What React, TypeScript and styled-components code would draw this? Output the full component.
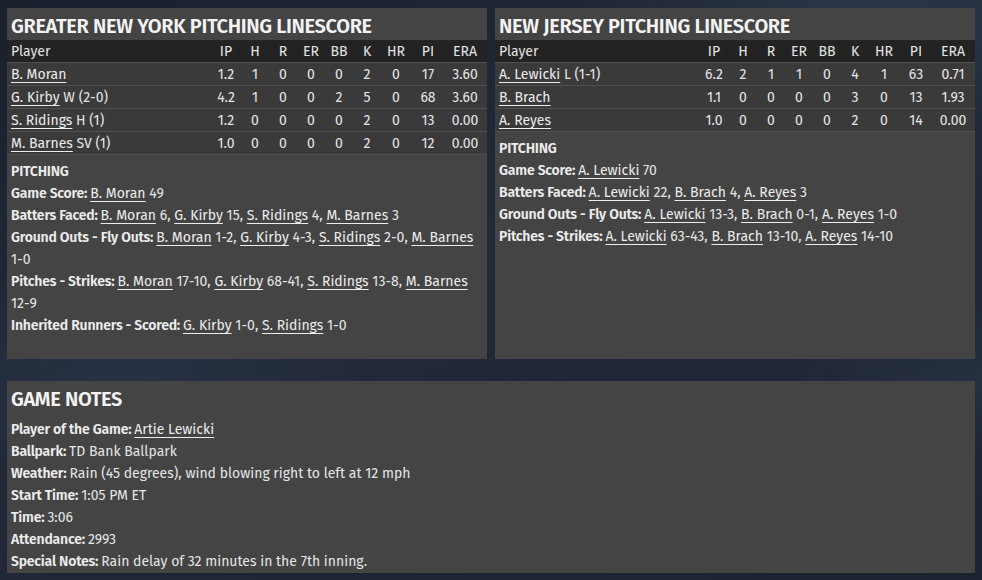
import React from "react";
import styled, { createGlobalStyle } from "styled-components";

const GlobalStyle = createGlobalStyle`
    html, body {
        margin: 0;
        padding: 0;
        background: #1c2331;
    }
    body {
        font-family: "Fira Sans", Roboto, "Noto Sans", sans-serif;
        color: #e4e4e4;
    }
`;

type Pitcher = {
    name: string;
    note?: string;
    stats: string[];
};

type Part = { link?: string; text?: string };

type StatLine = { label: string; parts: Part[] };

const COLUMNS = ["IP", "H", "R", "ER", "BB", "K", "HR", "PI", "ERA"];

const home: Pitcher[] = [
    { name: "B. Moran", stats: ["1.2", "1", "0", "0", "0", "2", "0", "17", "3.60"] },
    { name: "G. Kirby", note: "W (2-0)", stats: ["4.2", "1", "0", "0", "2", "5", "0", "68", "3.60"] },
    { name: "S. Ridings", note: "H (1)", stats: ["1.2", "0", "0", "0", "0", "2", "0", "13", "0.00"] },
    { name: "M. Barnes", note: "SV (1)", stats: ["1.0", "0", "0", "0", "0", "2", "0", "12", "0.00"] },
];

const away: Pitcher[] = [
    { name: "A. Lewicki", note: "L (1-1)", stats: ["6.2", "2", "1", "1", "0", "4", "1", "63", "0.71"] },
    { name: "B. Brach", stats: ["1.1", "0", "0", "0", "0", "3", "0", "13", "1.93"] },
    { name: "A. Reyes", stats: ["1.0", "0", "0", "0", "0", "2", "0", "14", "0.00"] },
];

const homeLines: StatLine[] = [
    { label: "Game Score:", parts: [{ link: "B. Moran" }, { text: " 49" }] },
    {
        label: "Batters Faced:",
        parts: [
            { link: "B. Moran" }, { text: " 6, " },
            { link: "G. Kirby" }, { text: " 15, " },
            { link: "S. Ridings" }, { text: " 4, " },
            { link: "M. Barnes" }, { text: " 3" },
        ],
    },
    {
        label: "Ground Outs - Fly Outs:",
        parts: [
            { link: "B. Moran" }, { text: " 1-2, " },
            { link: "G. Kirby" }, { text: " 4-3, " },
            { link: "S. Ridings" }, { text: " 2-0, " },
            { link: "M. Barnes" }, { text: " 1-0" },
        ],
    },
    {
        label: "Pitches - Strikes:",
        parts: [
            { link: "B. Moran" }, { text: " 17-10, " },
            { link: "G. Kirby" }, { text: " 68-41, " },
            { link: "S. Ridings" }, { text: " 13-8, " },
            { link: "M. Barnes" }, { text: " 12-9" },
        ],
    },
    {
        label: "Inherited Runners - Scored:",
        parts: [
            { link: "G. Kirby" }, { text: " 1-0, " },
            { link: "S. Ridings" }, { text: " 1-0" },
        ],
    },
];

const awayLines: StatLine[] = [
    { label: "Game Score:", parts: [{ link: "A. Lewicki" }, { text: " 70" }] },
    {
        label: "Batters Faced:",
        parts: [
            { link: "A. Lewicki" }, { text: " 22, " },
            { link: "B. Brach" }, { text: " 4, " },
            { link: "A. Reyes" }, { text: " 3" },
        ],
    },
    {
        label: "Ground Outs - Fly Outs:",
        parts: [
            { link: "A. Lewicki" }, { text: " 13-3, " },
            { link: "B. Brach" }, { text: " 0-1, " },
            { link: "A. Reyes" }, { text: " 1-0" },
        ],
    },
    {
        label: "Pitches - Strikes:",
        parts: [
            { link: "A. Lewicki" }, { text: " 63-43, " },
            { link: "B. Brach" }, { text: " 13-10, " },
            { link: "A. Reyes" }, { text: " 14-10" },
        ],
    },
];

const notes: StatLine[] = [
    { label: "Player of the Game:", parts: [{ link: "Artie Lewicki" }] },
    { label: "Ballpark:", parts: [{ text: "TD Bank Ballpark" }] },
    { label: "Weather:", parts: [{ text: "Rain (45 degrees), wind blowing right to left at 12 mph" }] },
    { label: "Start Time:", parts: [{ text: "1:05 PM ET" }] },
    { label: "Time:", parts: [{ text: "3:06" }] },
    { label: "Attendance:", parts: [{ text: "2993" }] },
    { label: "Special Notes:", parts: [{ text: "Rain delay of 32 minutes in the 7th inning." }] },
];

const Page = styled.div`
    box-sizing: border-box;
    width: 982px;
    height: 580px;
    padding: 8px 7px;
    display: grid;
    grid-template-columns: 480px 480px;
    grid-template-rows: 351px 192px;
    column-gap: 8px;
    row-gap: 22px;
    background:
        radial-gradient(ellipse 420px 160px at 860px 20px, rgba(70, 84, 110, 0.35), transparent 70%),
        radial-gradient(ellipse 300px 120px at 980px 380px, rgba(60, 72, 96, 0.3), transparent 70%),
        radial-gradient(ellipse 380px 140px at 120px 370px, rgba(55, 66, 90, 0.3), transparent 70%),
        linear-gradient(160deg, #1a202c 0%, #222a3a 45%, #1b2230 100%);
`;

const Panel = styled.section<{ $wide?: boolean }>`
    background: #444444;
    display: flex;
    flex-direction: column;
    min-width: 0;
    grid-column: ${(p) => (p.$wide ? "1 / span 2" : "auto")};
`;

const Title = styled.h2`
    margin: 0;
    height: 32px;
    line-height: 36px;
    padding: 0 4px;
    font-size: 20px;
    font-weight: 600;
    letter-spacing: -0.35px;
    color: #f3f3f3;
    white-space: nowrap;
`;

const Row = styled.div<{ $head?: boolean }>`
    display: grid;
    grid-template-columns: 200px 30px 28px 28px 28px 28px 28px 30px 34px 40px;
    padding: 0 6px 0 4px;
    height: 22px;
    line-height: 24px;
    font-size: 14px;
    background: ${(p) => (p.$head ? "#232323" : "#3a3a3a")};
    border-bottom: 1px solid ${(p) => (p.$head ? "#505050" : "#4f4f4f")};
`;

const Cell = styled.span`
    text-align: center;
    white-space: nowrap;
`;

const NameCell = styled.span`
    white-space: nowrap;
`;

const Link = styled.span`
    text-decoration: underline;
    text-underline-offset: 3px;
    text-decoration-thickness: 1px;
    color: #ececec;
`;

const Section = styled.div<{ $top: number }>`
    padding: ${(p) => p.$top}px 4px 0;
    font-size: 14px;
    line-height: 22px;
`;

const Heading = styled.div`
    font-weight: 600;
    letter-spacing: -0.2px;
    color: #ececec;
`;

const Line = styled.div``;

const Label = styled.span`
    font-weight: 600;
    letter-spacing: -0.2px;
    color: #ececec;
    margin-right: 3px;
`;

const StatTable = ({ pitchers }: { pitchers: Pitcher[] }) => (
    <div>
        <Row $head>
            <NameCell>Player</NameCell>
            {COLUMNS.map((c) => (
                <Cell key={c}>{c}</Cell>
            ))}
        </Row>
        {pitchers.map((p) => (
            <Row key={p.name}>
                <NameCell>
                    <Link>{p.name}</Link>
                    {p.note && ` ${p.note}`}
                </NameCell>
                {p.stats.map((s, i) => (
                    <Cell key={i}>{s}</Cell>
                ))}
            </Row>
        ))}
    </div>
);

const Lines = ({ lines }: { lines: StatLine[] }) => (
    <>
        {lines.map((l) => (
            <Line key={l.label}>
                <Label>{l.label}</Label>
                {l.parts.map((part, i) =>
                    part.link ? <Link key={i}>{part.link}</Link> : <span key={i}>{part.text}</span>
                )}
            </Line>
        ))}
    </>
);

const Linescore = ({ title, pitchers, lines }: { title: string; pitchers: Pitcher[]; lines: StatLine[] }) => (
    <Panel>
        <Title>{title}</Title>
        <StatTable pitchers={pitchers} />
        <Section $top={6}>
            <Heading>PITCHING</Heading>
            <Lines lines={lines} />
        </Section>
    </Panel>
);

export default function App() {
    return (
        <>
            <GlobalStyle />
            <Page>
                <Linescore title="GREATER NEW YORK PITCHING LINESCORE" pitchers={home} lines={homeLines} />
                <Linescore title="NEW JERSEY PITCHING LINESCORE" pitchers={away} lines={awayLines} />
                <Panel $wide>
                    <Title>GAME NOTES</Title>
                    <Section $top={6}>
                        <Lines lines={notes} />
                    </Section>
                </Panel>
            </Page>
        </>
    );
}
